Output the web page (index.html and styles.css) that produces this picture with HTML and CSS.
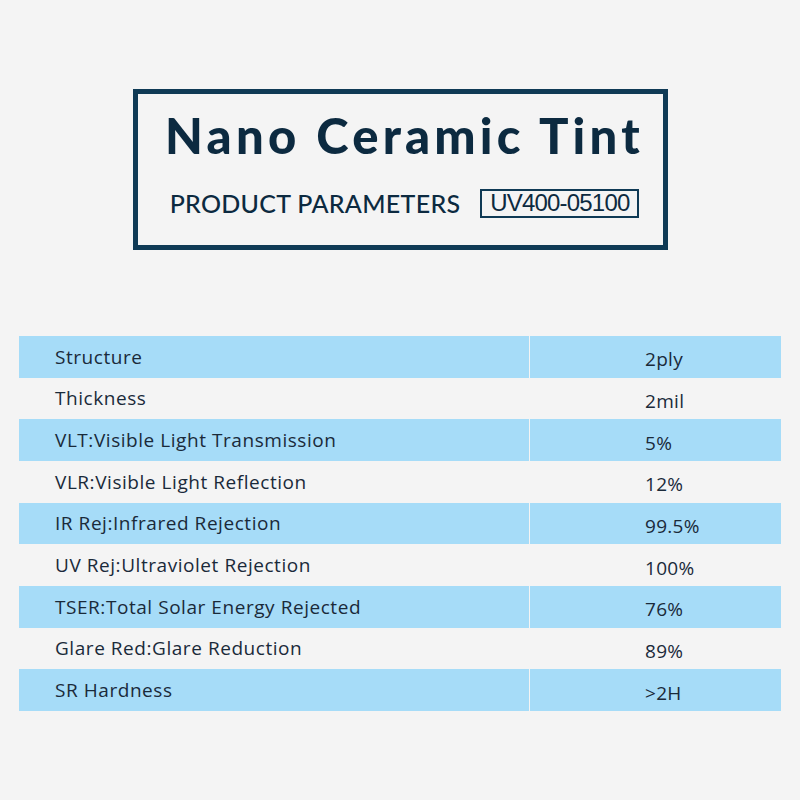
FILE: index.html
```html
<!DOCTYPE html>
<html>
<head>
<meta charset="utf-8">
<link rel="stylesheet" href="styles.css">
</head>
<body>
<div class="header">
  <h1 class="title">Nano Ceramic Tint</h1>
  <div class="sub">
    <span class="sub-label">PRODUCT PARAMETERS</span>
    <span class="badge">UV400-05100</span>
  </div>
</div>
<div class="table">
  <div class="row blue"><div class="c1">Structure</div><div class="c2">2ply</div></div>
  <div class="row"><div class="c1">Thickness</div><div class="c2">2mil</div></div>
  <div class="row blue"><div class="c1">VLT:Visible Light Transmission</div><div class="c2">5%</div></div>
  <div class="row"><div class="c1">VLR:Visible Light Reflection</div><div class="c2">12%</div></div>
  <div class="row blue"><div class="c1">IR Rej:Infrared Rejection</div><div class="c2">99.5%</div></div>
  <div class="row"><div class="c1">UV Rej:Ultraviolet Rejection</div><div class="c2">100%</div></div>
  <div class="row blue"><div class="c1">TSER:Total Solar Energy Rejected</div><div class="c2">76%</div></div>
  <div class="row"><div class="c1">Glare Red:Glare Reduction</div><div class="c2">89%</div></div>
  <div class="row blue"><div class="c1">SR Hardness</div><div class="c2">&gt;2H</div></div>
</div>
</body>
</html>
```
FILE: styles.css
```css
html, body {
  margin: 0;
  padding: 0;
  background: #f4f4f4;
}
body {
  padding-top: 89px;
  height: 800px;
  box-sizing: border-box;
}
.header {
  box-sizing: border-box;
  width: 535px;
  height: 161px;
  margin: 0 0 0 133px;
  border: 5px solid #0f3a55;
  display: flex;
  flex-direction: column;
  align-items: center;
  padding-top: 13px;
}
.title {
  margin: 0 0 0 8px;
  font-family: "Lato", sans-serif;
  font-weight: 900;
  font-size: 49px;
  line-height: 56px;
  letter-spacing: 4.2px;
  color: #0c2a40;
  white-space: nowrap;
}
.sub {
  display: flex;
  align-items: center;
  gap: 20px;
  margin-top: 25px;
  margin-left: 8px;
}
.sub-label {
  font-family: "Lato", sans-serif;
  font-weight: 500;
  font-size: 25px;
  letter-spacing: 0.3px;
  color: #0c2a40;
  white-space: nowrap;
}
.badge {
  box-sizing: border-box;
  width: 159px;
  height: 29px;
  border: 2px solid #0f3a55;
  display: flex;
  align-items: center;
  justify-content: center;
  font-family: "Liberation Sans", sans-serif;
  font-size: 24px;
  letter-spacing: -0.8px;
  color: #0c2a40;
}
.table {
  margin: 86px 0 0 19px;
  width: 762px;
}
.row {
  display: flex;
  height: 41.67px;
  font-family: "Open Sans", sans-serif;
  font-size: 19px;
  color: #1a2a3a;
}
.c1 {
  width: 510px;
  box-sizing: border-box;
  padding-left: 36px;
  display: flex;
  align-items: center;
  letter-spacing: 0.55px;
}
.c2 {
  flex: 1;
  box-sizing: border-box;
  margin-left: 1px;
  padding-left: 115px;
  padding-top: 5px;
  display: flex;
  align-items: center;
  letter-spacing: 0.3px;
}
.row.blue .c1,
.row.blue .c2 {
  background: #a6dcf8;
}
.row.blue .c2 {
  margin-left: 0;
  border-left: 1px solid #f4f4f4;
}
```
